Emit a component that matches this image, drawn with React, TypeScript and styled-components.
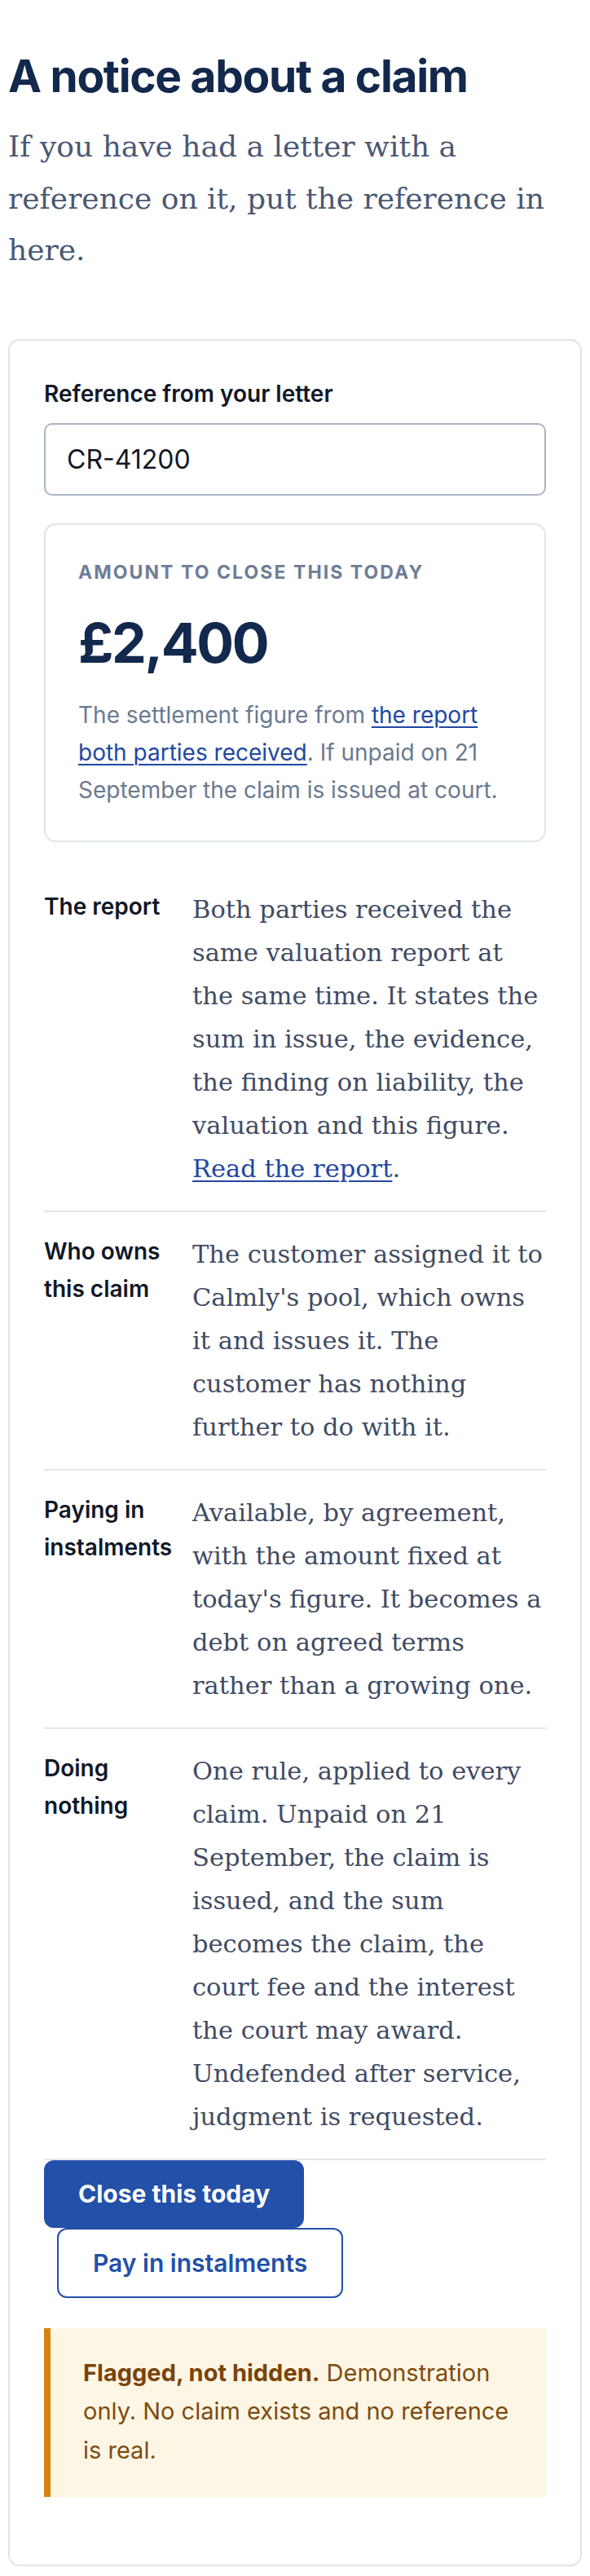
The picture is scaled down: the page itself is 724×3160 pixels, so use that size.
import styled, { createGlobalStyle } from 'styled-components';

const GlobalStyle = createGlobalStyle`
  html, body {
    margin: 0;
    padding: 0;
    background: #ffffff;
  }
  body {
    font-family: Inter, "Liberation Sans", sans-serif;
    -webkit-font-smoothing: antialiased;
  }
`;

const sans = `Inter, "Liberation Sans", sans-serif`;
const serif = `"DejaVu Serif", "Liberation Serif", serif`;

const Page = styled.main`
  padding: 60px 10px 10px;
`;

const Title = styled.h1`
  margin: 0;
  font: 700 55px/67px ${sans};
  letter-spacing: -1.3px;
  color: #12284c;
`;

const Lead = styled.p`
  margin: 21px 0 0;
  font: 400 36px/63.5px ${serif};
  color: #4a5873;
`;

const Card = styled.section`
  margin-top: 77px;
  border: 2px solid #dfe3e9;
  border-radius: 14px;
  padding: 45px 42px 83px;
`;

const FieldLabel = styled.label`
  display: block;
  margin-bottom: 16px;
  font: 600 28px/40px ${sans};
  color: #111827;
`;

const TextInput = styled.input`
  display: block;
  box-sizing: border-box;
  width: 100%;
  height: 89px;
  padding: 0 26px;
  border: 2px solid #a9b3c2;
  border-radius: 10px;
  font: 400 32px ${sans};
  color: #111827;
  background: #fff;
  outline: none;
`;

const AmountBox = styled.div`
  margin-top: 34px;
  border: 2px solid #e1e5ea;
  border-radius: 14px;
  padding: 42px 40px 39px;
`;

const Eyebrow = styled.div`
  font: 700 23px/32px ${sans};
  letter-spacing: 0.09em;
  text-transform: uppercase;
  color: #6e7d95;
`;

const Amount = styled.div`
  margin-top: 32px;
  font: 700 68px/77px ${sans};
  letter-spacing: -2.4px;
  color: #12284c;
`;

const Note = styled.p`
  margin: 27px 0 0;
  font: 400 28px/46px ${sans};
  color: #6b7a90;
`;

const Link = styled.a`
  color: #2347a2;
  text-decoration: underline;
  text-underline-offset: 4px;
  text-decoration-thickness: 2px;
`;

const Facts = styled.dl`
  margin: 31px 0 0;
`;

const Fact = styled.div`
  display: grid;
  grid-template-columns: 160px 1fr;
  column-gap: 22px;
  padding: 25px 0;
  border-bottom: 2px solid #e3e6eb;
`;

const FactLabel = styled.dt`
  margin: 0;
  font: 600 28px/46px ${sans};
  color: #111827;
`;

const FactText = styled.dd`
  margin: 0;
  font: 400 30.5px/53px ${serif};
  color: #3f4b63;
`;

const Actions = styled.div`
  display: flex;
  flex-wrap: wrap;
  align-items: flex-start;
`;

const Button = styled.button<{ $variant: 'primary' | 'secondary' }>`
  box-sizing: border-box;
  height: ${({ $variant }) => ($variant === 'primary' ? '83px' : '86px')};
  padding: 0 ${({ $variant }) => ($variant === 'primary' ? '40px' : '42px')};
  margin-left: ${({ $variant }) => ($variant === 'primary' ? '0' : '16px')};
  border: 2px solid #2350a8;
  border-radius: 12px;
  background: ${({ $variant }) => ($variant === 'primary' ? '#2350a8' : '#ffffff')};
  color: ${({ $variant }) => ($variant === 'primary' ? '#ffffff' : '#2350a8')};
  font: ${({ $variant }) => ($variant === 'primary' ? 700 : 600)} 30px ${sans};
  cursor: pointer;
`;

const Callout = styled.aside`
  margin-top: 37px;
  border-left: 8px solid #d4840f;
  background: #fdf6e4;
  padding: 31px 40px 34px;
  font: 400 29px/47.5px ${sans};
  color: #7f4b10;

  strong {
    font-weight: 700;
    color: #7a430b;
  }
`;

const facts = [
  {
    label: 'The report',
    text: (
      <>
        Both parties received the same valuation report at the same time. It states the sum in
        issue, the evidence, the finding on liability, the valuation and this figure.{' '}
        <Link href="#report">Read the report</Link>.
      </>
    ),
  },
  {
    label: 'Who owns this claim',
    text: "The customer assigned it to Calmly's pool, which owns it and issues it. The customer has nothing further to do with it.",
  },
  {
    label: 'Paying in instalments',
    text: "Available, by agreement, with the amount fixed at today's figure. It becomes a debt on agreed terms rather than a growing one.",
  },
  {
    label: 'Doing nothing',
    text: 'One rule, applied to every claim. Unpaid on 21 September, the claim is issued, and the sum becomes the claim, the court fee and the interest the court may award. Undefended after service, judgment is requested.',
  },
];

export default function App() {
  return (
    <>
      <GlobalStyle />
      <Page>
        <Title>A notice about a claim</Title>
        <Lead>If you have had a letter with a reference on it, put the reference in here.</Lead>

        <Card>
          <FieldLabel htmlFor="ref">Reference from your letter</FieldLabel>
          <TextInput id="ref" defaultValue="CR-41200" />

          <AmountBox>
            <Eyebrow>Amount to close this today</Eyebrow>
            <Amount>£2,400</Amount>
            <Note>
              The settlement figure from{' '}
              <Link href="#report">the report both parties received</Link>. If unpaid on 21
              September the claim is issued at court.
            </Note>
          </AmountBox>

          <Facts>
            {facts.map((f) => (
              <Fact key={f.label}>
                <FactLabel>{f.label}</FactLabel>
                <FactText>{f.text}</FactText>
              </Fact>
            ))}
          </Facts>

          <Actions>
            <Button $variant="primary">Close this today</Button>
            <Button $variant="secondary">Pay in instalments</Button>
          </Actions>

          <Callout>
            <strong>Flagged, not hidden.</strong> Demonstration only. No claim exists and no
            reference is real.
          </Callout>
        </Card>
      </Page>
    </>
  );
}
